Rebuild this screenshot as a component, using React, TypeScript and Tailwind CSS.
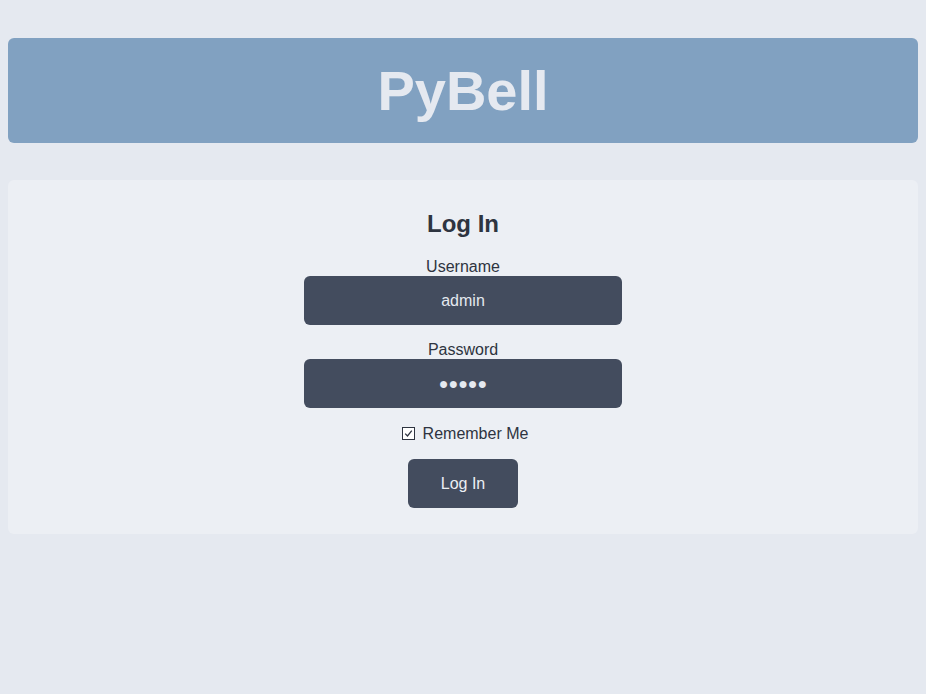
export default function App() {
  return (
    <div
      className="min-h-[694px] bg-[#e5e9f0] px-2 pt-[38px] text-[#2e3440]"
      style={{ fontFamily: '"Liberation Sans", Arial, sans-serif' }}
    >
      <header className="flex h-[105px] items-center justify-center rounded-md bg-[#81a1c1]">
        <h1 className="text-[56px] font-bold leading-none text-[#e5e9f0]">PyBell</h1>
      </header>

      <main className="mt-[37px] flex flex-col items-center rounded-md bg-[#eceff4] pb-[26px] pt-[30px]">
        <h2 className="text-2xl font-bold leading-[28px]">Log In</h2>

        <form className="mt-[19px] flex flex-col items-center" onSubmit={(e) => e.preventDefault()}>
          <label className="flex flex-col items-center text-base leading-[19px]">
            Username
            <input
              className="h-[49px] w-[318px] rounded-md bg-[#434c5e] text-center text-base text-[#e5e9f0] outline-none"
              name="username"
              defaultValue="admin"
            />
          </label>

          <label className="mt-[15px] flex flex-col items-center text-base leading-[19px]">
            Password
            <input
              className="h-[49px] w-[318px] rounded-md bg-[#434c5e] text-center text-base text-[#e5e9f0] outline-none"
              name="password"
              readOnly
              value={"\u25CF\u25CF\u25CF\u25CF\u25CF"}
            />
          </label>

          <label className="mt-4 flex items-center gap-2 pl-1 text-base leading-[19px]">
            <span className="flex h-[13px] w-[13px] items-center justify-center border border-[#2e3440] bg-white">
              <svg width="9" height="9" viewBox="0 0 9 9" fill="none">
                <path d="M1.2 4.6 L3.5 7 L7.8 1.6" stroke="#2e3440" strokeWidth="1.3" />
              </svg>
            </span>
            Remember Me
          </label>

          <button
            type="submit"
            className="mt-4 h-[49px] w-[110px] rounded-md bg-[#434c5e] text-base text-[#eceff4]"
          >
            Log In
          </button>
        </form>
      </main>
    </div>
  );
}
